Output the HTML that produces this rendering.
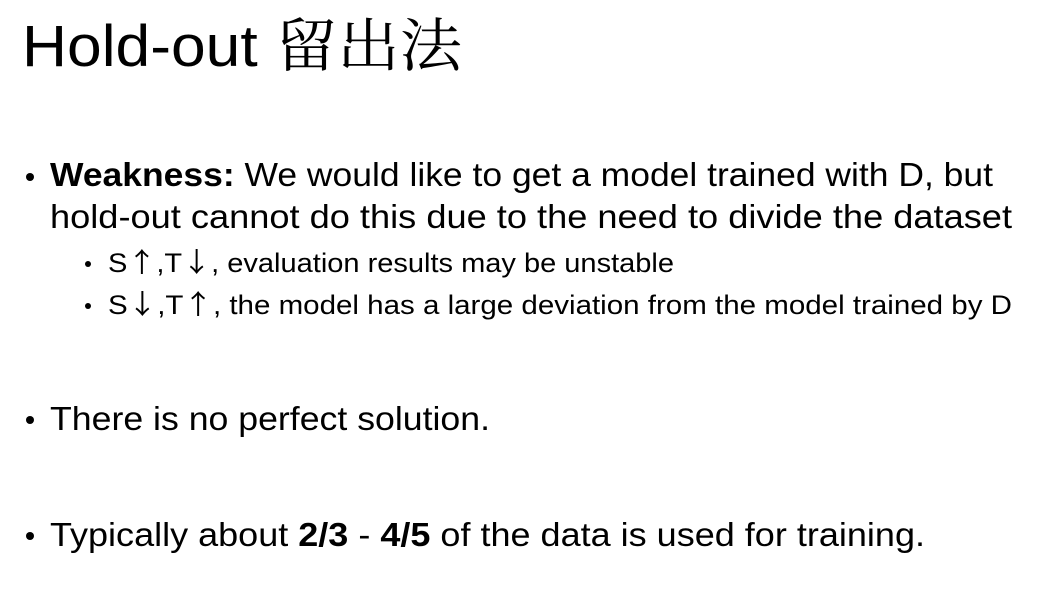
<!DOCTYPE html>
<html><head><meta charset="utf-8"><style>
html,body{margin:0;padding:0;background:#fff;width:1044px;height:589px;overflow:hidden}
svg{display:block}
text{font-family:"Liberation Sans","Noto Sans CJK SC",sans-serif;fill:#000}
.cj{font-family:"Noto Sans CJK SC",sans-serif}
.sf{font-family:"Noto Serif CJK SC",serif}
</style></head><body>
<svg width="1044" height="589" viewBox="0 0 1044 589" xmlns="http://www.w3.org/2000/svg">
<text x="22" y="66" font-size="58" textLength="440" lengthAdjust="spacingAndGlyphs">Hold-out <tspan class="sf">留出法</tspan></text>
<circle cx="30" cy="177" r="4"/>
<text x="50" y="186" font-size="33" textLength="943" lengthAdjust="spacingAndGlyphs"><tspan font-weight="bold">Weakness:</tspan> We would like to get a model trained with D, but</text>
<text x="50" y="228" font-size="33" textLength="962" lengthAdjust="spacingAndGlyphs">hold-out cannot do this due to the need to divide the dataset</text>
<circle cx="88" cy="264" r="3"/>
<text x="108" y="272" font-size="27" textLength="566" lengthAdjust="spacingAndGlyphs">S<tspan class="cj">↑</tspan>,T<tspan class="cj">↓</tspan>, evaluation results may be unstable</text>
<circle cx="88" cy="306" r="3"/>
<text x="108" y="314" font-size="27" textLength="904" lengthAdjust="spacingAndGlyphs">S<tspan class="cj">↓</tspan>,T<tspan class="cj">↑</tspan>, the model has a large deviation from the model trained by D</text>
<circle cx="30" cy="420" r="4"/>
<text x="50" y="430" font-size="33" textLength="440" lengthAdjust="spacingAndGlyphs">There is no perfect solution.</text>
<circle cx="30" cy="536" r="4"/>
<text x="50" y="546" font-size="33" textLength="875" lengthAdjust="spacingAndGlyphs">Typically about <tspan font-weight="bold">2/3</tspan> - <tspan font-weight="bold">4/5</tspan> of the data is used for training.</text>
</svg>
</body></html>
